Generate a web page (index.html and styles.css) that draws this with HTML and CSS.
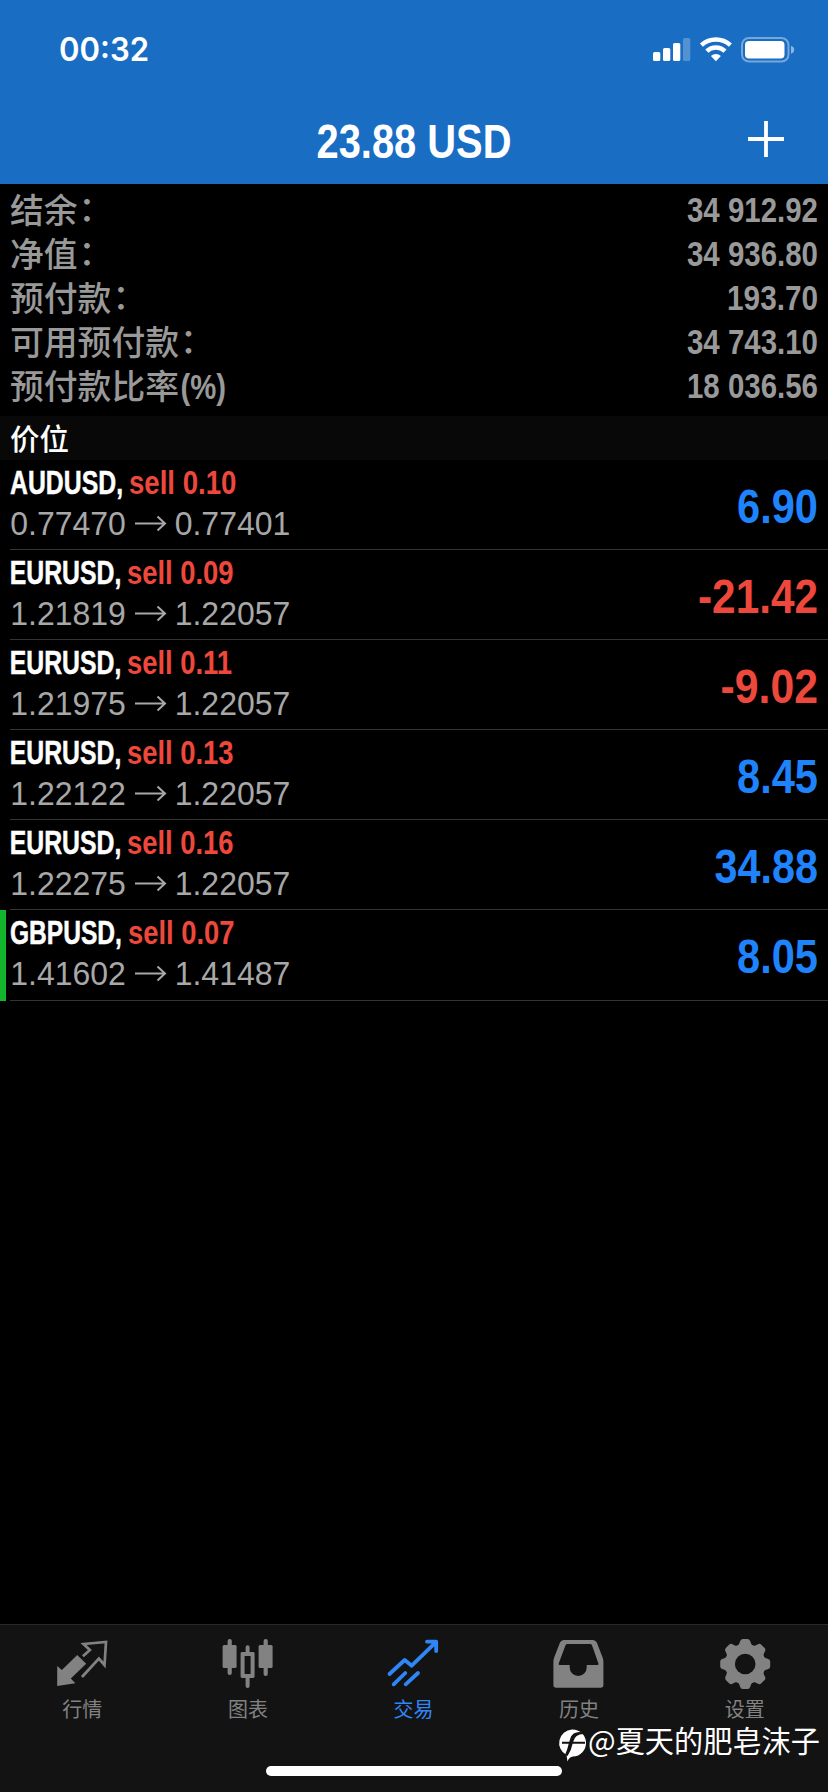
FILE: index.html
```html
<!DOCTYPE html>
<html lang="zh-CN">
<head>
<meta charset="utf-8">
<title>交易</title>
<link rel="stylesheet" href="styles.css">
</head>
<body>
<div class="screen">
  <header class="header">
    <div class="status">
      <svg class="time" width="90" height="30"><text x="0" y="25" textLength="90" lengthAdjust="spacingAndGlyphs">00:32</text></svg>
      <svg class="status-icons" width="144" height="28" viewBox="0 0 144 28" fill="#fff">
        <rect x="1" y="16" width="7.3" height="9" rx="1.6"/>
        <rect x="11" y="12" width="7.3" height="13" rx="1.6"/>
        <rect x="21" y="7" width="7.3" height="18" rx="1.6"/>
        <rect x="31" y="2" width="7.3" height="23" rx="1.6" opacity=".25"/>
        <g fill="none" stroke="#fff" stroke-width="4.4">
          <path d="M49.4 9.2a21.4 21.4 0 0 1 29 0"/>
          <path d="M54.8 15.2a13.2 13.2 0 0 1 18.2 0"/>
        </g>
        <path d="M63.9 25.2l-5-5.1a7.3 7.3 0 0 1 10 0z"/>
        <rect x="90" y="2" width="46.5" height="23.5" rx="7" fill="none" stroke="#fff" stroke-width="2" opacity=".4"/>
        <rect x="93" y="5" width="39.5" height="17.5" rx="4"/>
        <path d="M139 9.8q3.200 1.200 3.200 4t-3.200 4z" opacity=".5"/>
      </svg>
    </div>
    <div class="titlebar">
      <svg class="title" width="196" height="50"><text transform="translate(.5 42) scale(.8135 1)">23.88 USD</text></svg>
      <svg class="plus" width="36" height="36" viewBox="0 0 36 36"><path d="M0 18H36M18 0V36" stroke="#fff" stroke-width="3.8"/></svg>
    </div>
  </header>

  <section class="summary">
    <div class="line"><span>结余<i>：</i></span><svg width="180" height="44"><text transform="translate(180 34) scale(.854 1)">34 912.92</text></svg></div>
    <div class="line"><span>净值<i>：</i></span><svg width="180" height="44"><text transform="translate(180 34) scale(.854 1)">34 936.80</text></svg></div>
    <div class="line"><span>预付款<i>：</i></span><svg width="180" height="44"><text transform="translate(180 34) scale(.862 1)">193.70</text></svg></div>
    <div class="line"><span>可用预付款<i>：</i></span><svg width="180" height="44"><text transform="translate(180 34) scale(.854 1)">34 743.10</text></svg></div>
    <div class="line"><span>预付款比率<svg class="percent" width="60" height="44"><text transform="translate(1.5 35) scale(.849 1)">(%)</text></svg></span><svg width="180" height="44"><text transform="translate(180 34) scale(.854 1)">18 036.56</text></svg></div>
  </section>

  <h2 class="group">价位</h2>

  <section class="positions">
    <div class="pos">
      <svg class="info" width="300" height="89"><text class="sym" transform="translate(10 34) scale(.752 1)">AUDUSD,</text><text class="side" transform="translate(129 34) scale(.837 1)">sell 0.10</text><text class="price" transform="translate(10.3 74.5) scale(.969 1)">0.77470</text><path class="arrow" d="M135 63.500H165M157.500 56.500l7.500 7-7.500 7"/><text class="price" transform="translate(174.7 74.5) scale(.969 1)">0.77401</text></svg>
      <svg class="pnl up" width="180" height="89"><text transform="translate(180 63) scale(.849 1)">6.90</text></svg>
    </div>
    <div class="pos">
      <svg class="info" width="300" height="89"><text class="sym" transform="translate(9.8 34) scale(.751 1)">EURUSD,</text><text class="side" transform="translate(127 34) scale(.83 1)">sell 0.09</text><text class="price" transform="translate(10.3 74.5) scale(.969 1)">1.21819</text><path class="arrow" d="M135 63.500H165M157.500 56.500l7.500 7-7.500 7"/><text class="price" transform="translate(174.7 74.5) scale(.969 1)">1.22057</text></svg>
      <svg class="pnl down" width="180" height="89"><text transform="translate(180 63) scale(.864 1)">-21.42</text></svg>
    </div>
    <div class="pos">
      <svg class="info" width="300" height="89"><text class="sym" transform="translate(9.8 34) scale(.751 1)">EURUSD,</text><text class="side" transform="translate(127 34) scale(.83 1)">sell 0.11</text><text class="price" transform="translate(10.3 74.5) scale(.969 1)">1.21975</text><path class="arrow" d="M135 63.500H165M157.500 56.500l7.500 7-7.500 7"/><text class="price" transform="translate(174.7 74.5) scale(.969 1)">1.22057</text></svg>
      <svg class="pnl down" width="180" height="89"><text transform="translate(180 63) scale(.873 1)">-9.02</text></svg>
    </div>
    <div class="pos">
      <svg class="info" width="300" height="89"><text class="sym" transform="translate(9.8 34) scale(.751 1)">EURUSD,</text><text class="side" transform="translate(127 34) scale(.83 1)">sell 0.13</text><text class="price" transform="translate(10.3 74.5) scale(.969 1)">1.22122</text><path class="arrow" d="M135 63.500H165M157.500 56.500l7.500 7-7.500 7"/><text class="price" transform="translate(174.7 74.5) scale(.969 1)">1.22057</text></svg>
      <svg class="pnl up" width="180" height="89"><text transform="translate(180 63) scale(.849 1)">8.45</text></svg>
    </div>
    <div class="pos">
      <svg class="info" width="300" height="89"><text class="sym" transform="translate(9.8 34) scale(.751 1)">EURUSD,</text><text class="side" transform="translate(127 34) scale(.83 1)">sell 0.16</text><text class="price" transform="translate(10.3 74.5) scale(.969 1)">1.22275</text><path class="arrow" d="M135 63.500H165M157.500 56.500l7.500 7-7.500 7"/><text class="price" transform="translate(174.7 74.5) scale(.969 1)">1.22057</text></svg>
      <svg class="pnl up" width="180" height="89"><text transform="translate(180 63) scale(.844 1)">34.88</text></svg>
    </div>
    <div class="pos marked">
      <svg class="info" width="300" height="89"><text class="sym" transform="translate(10 34) scale(.745 1)">GBPUSD,</text><text class="side" transform="translate(128 34) scale(.83 1)">sell 0.07</text><text class="price" transform="translate(10.3 74.5) scale(.969 1)">1.41602</text><path class="arrow" d="M135 63.500H165M157.500 56.500l7.500 7-7.500 7"/><text class="price" transform="translate(174.7 74.5) scale(.969 1)">1.41487</text></svg>
      <svg class="pnl up" width="180" height="89"><text transform="translate(180 63) scale(.849 1)">8.05</text></svg>
    </div>
  </section>

  <footer class="footer">
    <nav class="tabs">
      <div class="tab">
        <svg width="52" height="52" viewBox="0 0 52 52"><path fill="currentColor" d="M.2 28l4.700 4L20.200 17l9 8.700L13.800 40.500l4.600 4.700L.2 48z"/><path fill="none" stroke="currentColor" stroke-width="2.700" d="M25.900 18.300l7-6.300-6.400-6 22.500-2-1.500 23-5.600-6.500L25 39"/></svg>
        <span>行情</span>
      </div>
      <div class="tab">
        <svg width="52" height="52" viewBox="0 0 52 52" fill="currentColor"><rect x=".6" y="7" width="14" height="23" rx="1.500"/><rect x="5.600" y="1" width="4.200" height="36" rx="2"/><rect x="36.600" y="7" width="14" height="23" rx="1.500"/><rect x="41.600" y="1" width="4.200" height="37" rx="2"/><path fill-rule="evenodd" d="M20 14h3.600V9.300a2 2 0 0 1 4 0V14h3.600q1.400 0 1.400 1.400v23.200q0 1.400-1.400 1.400h-3.600v8a2 2 0 0 1-4 0v-8H20q-1.400 0-1.400-1.400V15.400Q18.600 14 20 14zm2.600 4v18h6V18z"/></svg>
        <span>图表</span>
      </div>
      <div class="tab active">
        <svg width="52" height="52" viewBox="0 0 52 52" fill="none" stroke="currentColor" stroke-width="3.800" stroke-linecap="round" stroke-linejoin="round"><path d="M1.500 36L16.700 22l7 5.700L47.700 4.300M39 3.700h9.200V13M5.700 46.300L17.300 35M17.700 46.300L30 35"/><path fill="currentColor" stroke="none" d="M42 3.700h6.200V10z"/></svg>
        <span>交易</span>
      </div>
      <div class="tab">
        <svg width="52" height="52" viewBox="0 0 52 52"><path fill="currentColor" fill-rule="evenodd" d="M-.6 24Q-.6 22 0 20L5.600 5.500Q6.800 2 10.400 2h28q3.600 0 4.800 3.500L48.800 20Q49.400 22 49.400 24v23q0 2.800-2.800 2.800H2.200Q-.6 49.800-.6 47zM13.500 6q-1.500 0-2 1.300L4.700 25.500Q4.500 27 5.500 27H15.700v2.500a8.500 8.500 0 0 0 17 0V27H43.500q1.200 0 .9-1.500L38 7.300Q37.500 6 36 6z"/></svg>
        <span>历史</span>
      </div>
      <div class="tab">
        <svg width="52" height="52" viewBox="-26.200 -26 52 52" fill="currentColor"><defs><path id="tooth" d="M-9 -18C-6.500 -18.500-6 -20-5.200 -22.500Q-4.500 -25-2.500 -25h5Q4.500 -25 5.200 -22.500C6 -20 6.500 -18.500 9 -18L0 0z"/></defs><circle r="19.800"/><use href="#tooth"/><use href="#tooth" transform="rotate(45)"/><use href="#tooth" transform="rotate(90)"/><use href="#tooth" transform="rotate(135)"/><use href="#tooth" transform="rotate(180)"/><use href="#tooth" transform="rotate(225)"/><use href="#tooth" transform="rotate(270)"/><use href="#tooth" transform="rotate(315)"/><circle r="10.300" fill="#131313"/></svg>
        <span>设置</span>
      </div>
    </nav>
    <div class="home"></div>
    <div class="watermark">
      <svg width="28" height="34" viewBox="0 0 28 34"><path fill="#fff" d="M14 .5a13.500 13.500 0 0 1 1 27Q11 28 9.500 32.500L8.500 26A13.500 13.500 0 0 1 14 .5z"/><path fill="#131313" d="M25.500 3.500Q15 1.500 12.300 9.500L11.300 12.800H4v1.900H10.700Q9.500 20.500 7 26l2.500 1Q13.500 21 14.600 14.700H27V12.800H15.200Q17 5 25.500 5z"/></svg>
      <span>@夏天的肥皂沫子</span>
    </div>
  </footer>
</div>
</body>
</html>
```
FILE: styles.css
```css
* { box-sizing: border-box; }
body { margin: 0; background: #000; }
svg { display: block; flex: none; overflow: visible; }
.screen {
  width: 828px;
  height: 1792px;
  display: flex;
  flex-direction: column;
  overflow: hidden;
  background: #000;
  font-family: "Liberation Sans", "Noto Sans CJK SC", sans-serif;
  font-kerning: none;
}

.header { height: 184px; background: #196dc3; color: #fff; }
.status {
  height: 100px;
  padding: 36px 32px 0 59px;
  display: flex;
  justify-content: space-between;
  align-items: flex-start;
}
.time text { font: 600 32.500px Inter, sans-serif; fill: #fff; }
.titlebar {
  height: 84px;
  padding: 16px 44px 0 316px;
  display: flex;
  justify-content: space-between;
}
.title text { font: bold 49px "Liberation Sans", sans-serif; fill: #fff; }
.plus { margin-top: 5px; }

.summary { height: 232px; padding: 4px 10px 0; }
.line {
  height: 44px;
  display: flex;
  justify-content: space-between;
  color: #999;
  font: 500 33.800px/42px "Noto Sans CJK SC", sans-serif;
}
.line span { display: flex; }
.line i { font-style: normal; margin: -2px 0 0 1px; }
.line text { font: bold 34.500px "Liberation Sans", sans-serif; fill: #999; }
.line > svg text, .pnl text { text-anchor: end; }

.group {
  height: 44px;
  margin: 0;
  padding-left: 10px;
  background: #080808;
  color: #fff;
  font: 500 29.500px/42px "Noto Sans CJK SC", sans-serif;
}

.pos {
  height: 90px;
  padding-right: 10px;
  display: flex;
  justify-content: space-between;
  background: linear-gradient(#343434, #343434) 10px 100% / 100% 1px no-repeat;
}
.marked { height: 91px; border-left: 6px solid #12b52c; background-position: 4px 100%; }
.marked .info { margin-left: -6px; }
.sym, .side, .price, .pnl text, .line text, .title text { font-kerning: none; }
.sym, .side { font: bold 33px "Liberation Sans", sans-serif; fill: #fff; }
.sym { stroke: #fff; stroke-width: .5px; }
.side { fill: #ee483d; }
.price { font: 33px "Liberation Sans", sans-serif; fill: #a8a8a8; }
.arrow { fill: none; stroke: #a8a8a8; stroke-width: 2; }
.pnl text { font: bold 49px "Liberation Sans", sans-serif; }
.up { fill: #1f83fb; }
.down { fill: #ee483d; }

.footer {
  position: relative;
  height: 168px;
  margin-top: auto;
  border-top: 1px solid #2a2a2a;
  background: #131313;
}
.tabs { display: grid; grid-template-columns: repeat(5, 1fr); padding-top: 13px; }
.tab {
  display: flex;
  flex-direction: column;
  align-items: center;
  color: #828282;
  font: 20px/24px "Noto Sans CJK SC", sans-serif;
}
.tab span { margin: 7px 1px 0 0; }
.active { color: #2f86f6; }
.home { width: 296px; height: 10px; margin: 45px auto 0; border-radius: 5px; background: #fff; }
.watermark {
  position: absolute;
  right: 8px;
  top: 96px;
  display: flex;
  align-items: flex-start;
  gap: 2px;
  color: #fff;
  font: 29.200px/36px "Noto Sans CJK SC", sans-serif;
  white-space: nowrap;
}
.watermark svg { margin-top: 8px; }
```
